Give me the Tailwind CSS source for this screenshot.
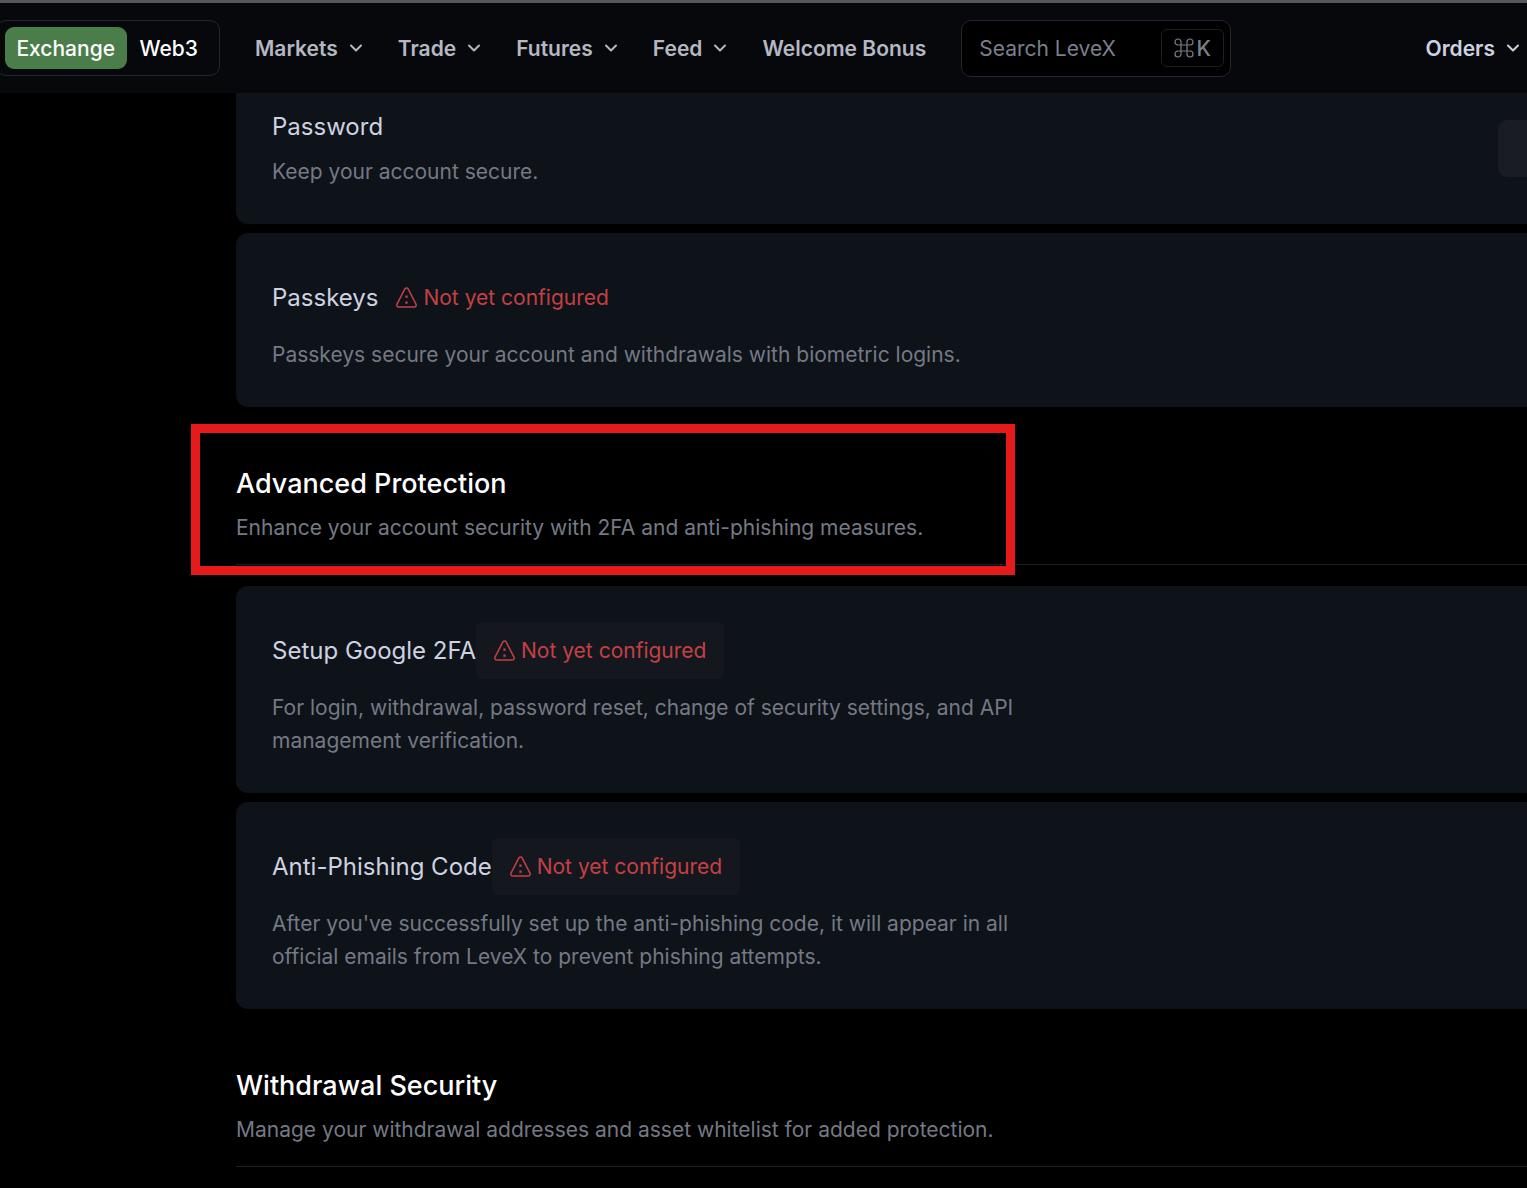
<!DOCTYPE html>
<html lang="en">
<head>
    <meta charset="UTF-8">
    <meta name="viewport" content="width=device-width, initial-scale=1">
    <title>LeveX - Account Security</title>
    <script src="https://cdn.jsdelivr.net/npm/@tailwindcss/browser@4"></script>
</head>
<body class="min-h-screen overflow-x-hidden bg-black font-['Inter',sans-serif] text-[21px] leading-[33px] text-[#757984]">
<svg class="hidden">
    <symbol id="chevron" viewBox="0 0 14 14">
        <path d="M2 4.5l5 5 5-5" fill="none" stroke="currentColor" stroke-width="2" stroke-linecap="round" stroke-linejoin="round"/>
    </symbol>
    <symbol id="warning" viewBox="0 0 22 22">
        <path d="M8.9 1.9a1.9 1.9 0 0 1 3.2 0l7.9 15.2a2 2 0 0 1-1.7 2.9H2.7a2 2 0 0 1-1.7-2.9z" fill="none" stroke="currentColor" stroke-width="1.5" stroke-linejoin="round"/>
        <path d="M10.5 8.4v2.4M10.5 14.6v2.2" fill="none" stroke="currentColor" stroke-width="2.3"/>
    </symbol>
</svg>

<header class="flex h-[93px] items-center border-t-3 border-[#55565b] bg-[#07080c] font-semibold text-[#b5b8c2]">
    <div class="-ml-1 flex h-14 w-[224px] shrink-0 items-center rounded-[10px] border border-[#24262d] px-2 font-medium text-white">
        <button class="h-[42px] w-[122px] rounded-[9px] bg-[#4b7d4b]">Exchange</button>
        <button class="h-[42px] px-[13px]">Web3</button>
    </div>
    <nav class="ml-[35px] flex shrink-0 items-center gap-[35px]">
        <button class="flex items-center gap-[11px]">Markets <svg class="size-[14px]"><use href="#chevron"/></svg></button>
        <button class="flex items-center gap-[11px]">Trade <svg class="size-[14px]"><use href="#chevron"/></svg></button>
        <button class="flex items-center gap-[11px]">Futures <svg class="size-[14px]"><use href="#chevron"/></svg></button>
        <button class="flex items-center gap-[11px]">Feed <svg class="size-[14px]"><use href="#chevron"/></svg></button>
        <a href="#">Welcome Bonus</a>
    </nav>
    <label class="ml-[35px] flex h-[57px] w-[270px] shrink-0 items-center rounded-[10px] border border-[#24262d] bg-black pr-[6px] pl-[17px] font-normal text-[#7b7f8a]">
        <input type="search" aria-label="Search" placeholder="Search LeveX" class="w-0 min-w-0 flex-1 outline-none placeholder:text-[#7b7f8a]">
        <kbd class="flex h-[38px] w-[63px] items-center justify-center gap-[2px] rounded-md border border-[#1c1e24] font-['Inter',sans-serif] leading-none font-medium">
            <svg class="size-5" viewBox="0 0 20 20" fill="none" stroke="currentColor" stroke-width="1.2"><path d="M7 7V4a3 3 0 1 0-3 3h12a3 3 0 1 0-3-3v12a3 3 0 1 0 3-3H4a3 3 0 1 0 3 3z"/></svg>K
        </kbd>
    </label>
    <button class="mr-[7px] ml-auto flex items-center gap-[11px] text-[#ced2e0]">Orders <svg class="size-[14px]"><use href="#chevron"/></svg></button>
</header>

<main class="pl-[236px]">
    <section class="flex flex-col gap-[9px]">
        <article class="flex items-center justify-between rounded-bl-xl bg-[#0e1219] pt-4 pb-9 pl-9">
            <div class="flex flex-col gap-[10px]">
                <h3 class="text-2xl leading-9 text-[#ced2e0]">Password</h3>
                <p>Keep your account secure.</p>
            </div>
            <button aria-label="Change password" class="h-[57px] w-[29px] rounded-l-[9px] bg-[#191c23]"></button>
        </article>
        <article class="flex flex-col gap-3 rounded-l-xl bg-[#0e1219] py-9 pl-9">
            <div class="flex items-center">
                <h3 class="text-2xl text-[#ced2e0]">Passkeys</h3>
                <div class="flex h-[57px] items-center gap-[5px] px-[18px] text-[#c44044]"><svg class="size-[22px]"><use href="#warning"/></svg>Not yet configured</div>
            </div>
            <p>Passkeys secure your account and withdrawals with biometric logins.</p>
        </article>
    </section>

    <section class="relative pt-[59px]">
        <div class="border-b border-[#1c1e23] pb-5">
            <h2 class="text-[27px] leading-9 font-medium text-white">Advanced Protection</h2>
            <p class="mt-[9px]">Enhance your account security with 2FA and anti-phishing measures.</p>
        </div>
        <!-- highlight frame -->
        <div class="pointer-events-none absolute top-[17px] -left-[45px] h-[151px] w-[824px] border-9 border-[#e51b1b]"></div>
        <div class="mt-[21px] flex flex-col gap-[9px]">
            <article class="flex flex-col gap-3 rounded-l-xl bg-[#0e1219] py-9 pl-9">
                <div class="flex items-center">
                    <h3 class="text-2xl text-[#ced2e0]">Setup Google 2FA</h3>
                    <button class="flex h-[57px] items-center gap-[5px] rounded-md bg-[#14181e] px-[18px] text-[#c44044]"><svg class="size-[22px]"><use href="#warning"/></svg>Not yet configured</button>
                </div>
                <p class="max-w-[760px]">For login, withdrawal, password reset, change of security settings, and API management verification.</p>
            </article>
            <article class="flex flex-col gap-3 rounded-l-xl bg-[#0e1219] py-9 pl-9">
                <div class="flex items-center">
                    <h3 class="text-2xl text-[#ced2e0]">Anti-Phishing Code</h3>
                    <button class="flex h-[57px] items-center gap-[5px] rounded-md bg-[#14181e] px-[18px] text-[#c44044]"><svg class="size-[22px]"><use href="#warning"/></svg>Not yet configured</button>
                </div>
                <p class="max-w-[760px]">After you've successfully set up the anti-phishing code, it will appear in all official emails from LeveX to prevent phishing attempts.</p>
            </article>
        </div>
    </section>

    <section class="pt-[59px]">
        <div class="border-b border-[#1c1e23] pb-5">
            <h2 class="text-[27px] leading-9 font-medium text-white">Withdrawal Security</h2>
            <p class="mt-[9px]">Manage your withdrawal addresses and asset whitelist for added protection.</p>
        </div>
    </section>
</main>
</body>
</html>
